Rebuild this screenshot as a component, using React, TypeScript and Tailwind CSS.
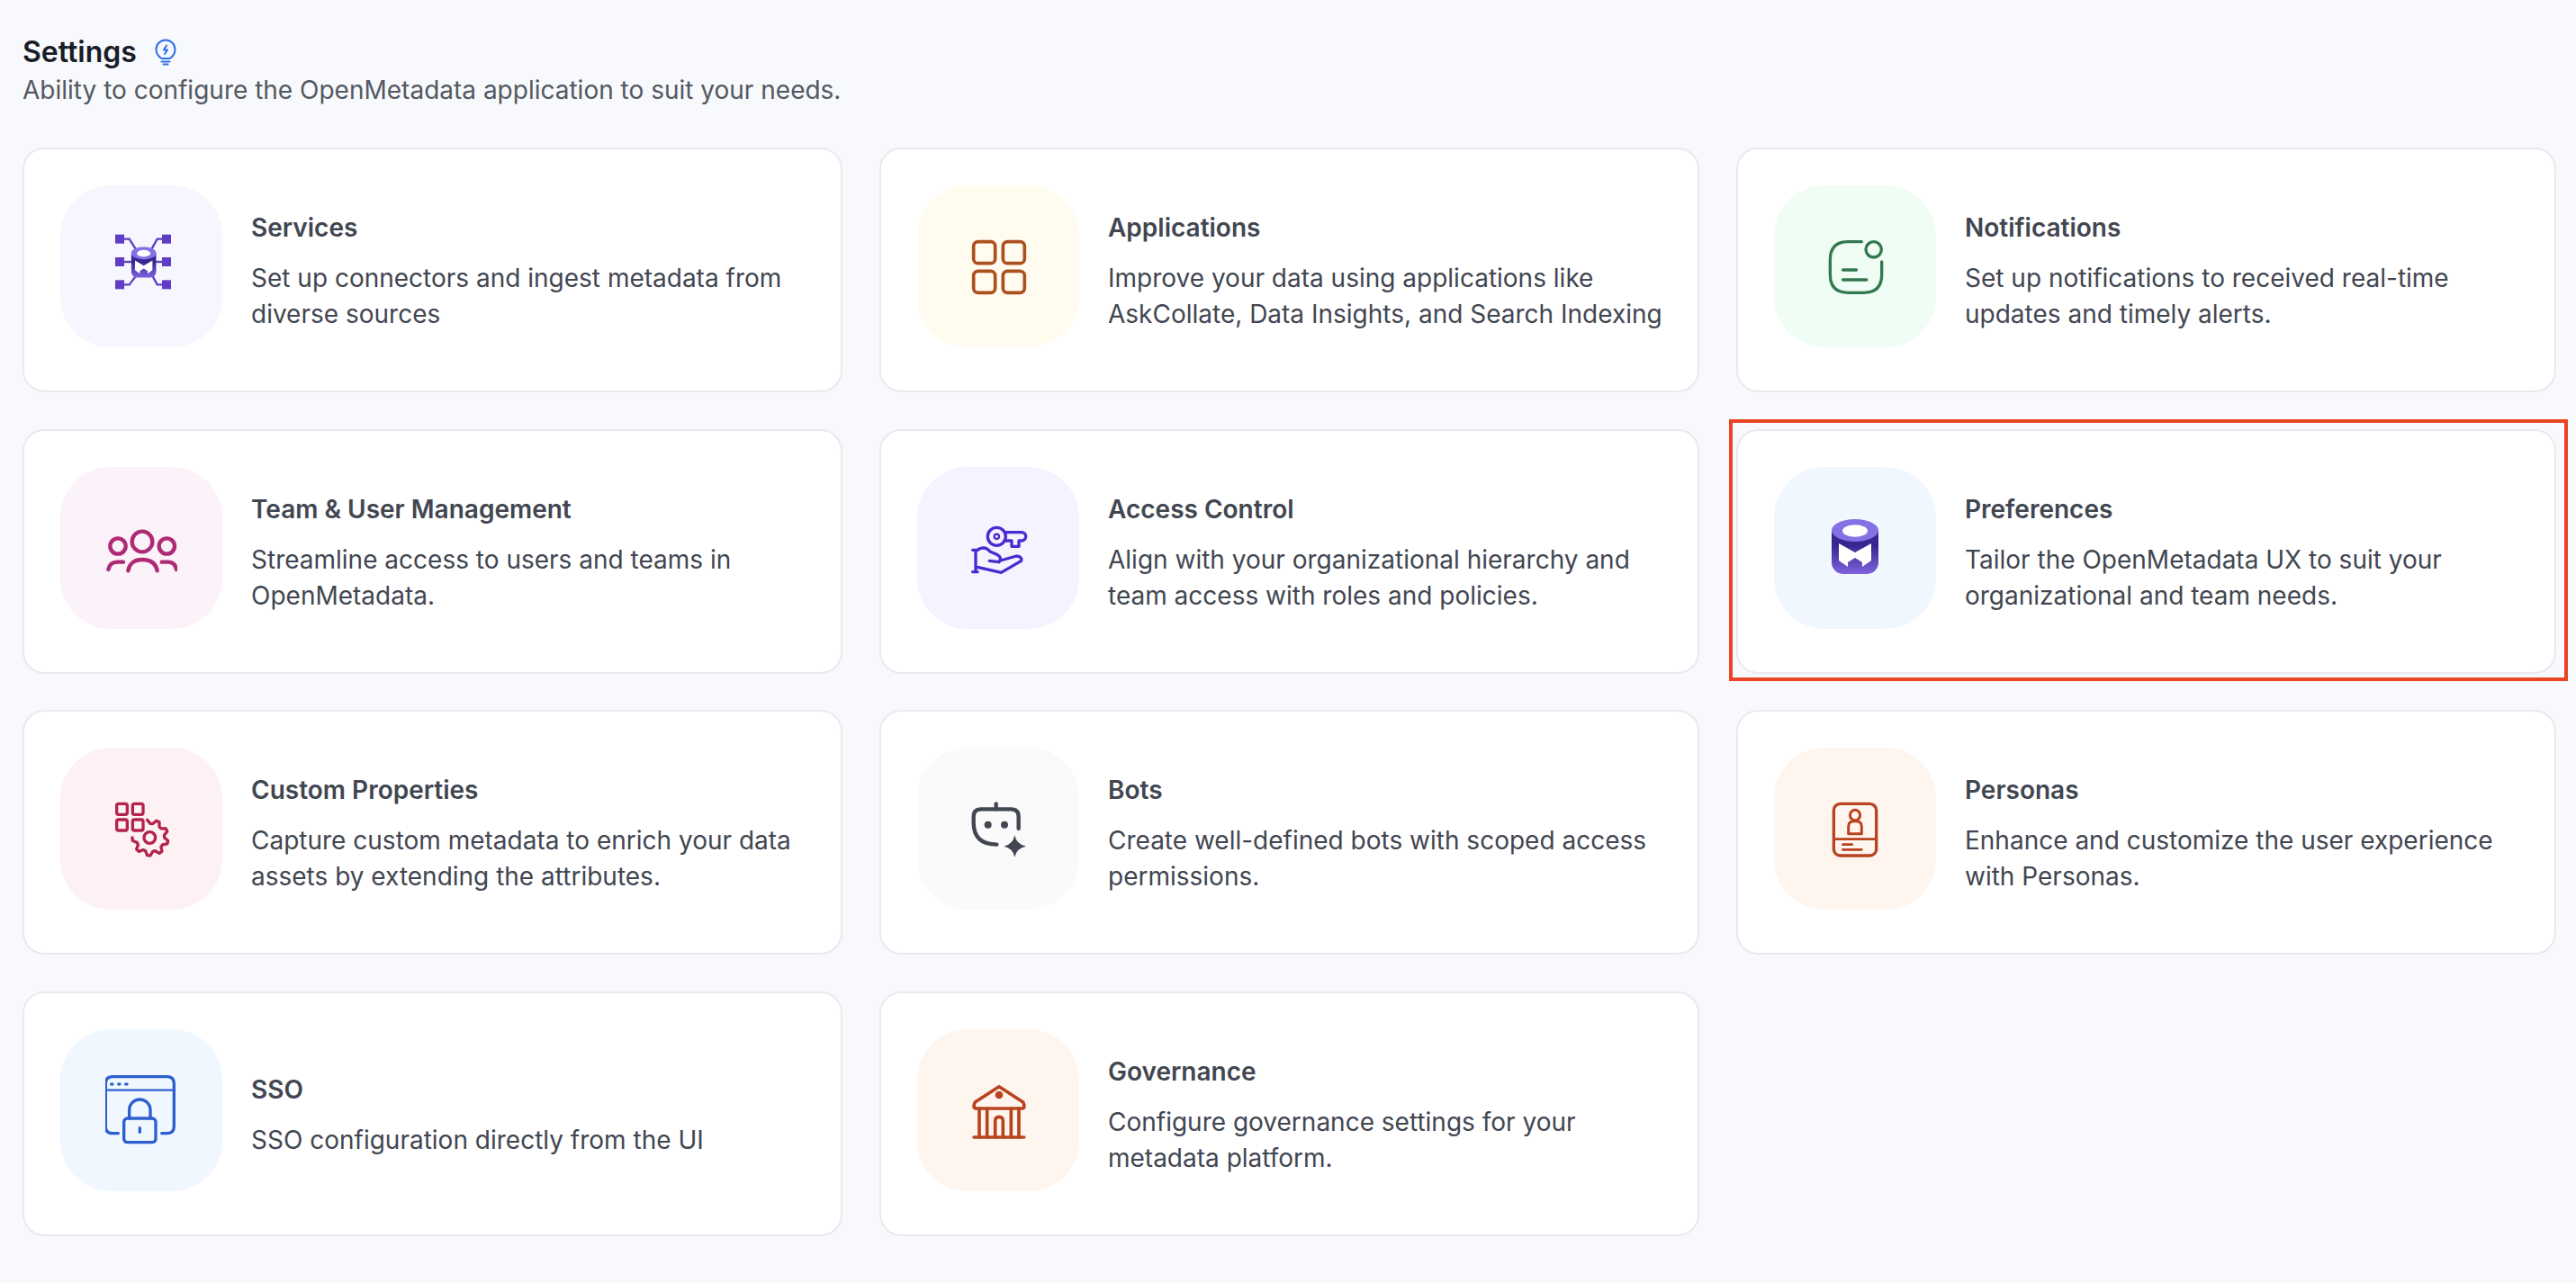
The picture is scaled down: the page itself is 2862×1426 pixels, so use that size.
import React from 'react';

// Settings landing page: header plus a three column grid of category cards

const OmLogo: React.FC<{ x: number; y: number; width: number; height: number }> = ({ x, y, width, height }) => (
    <svg x={x} y={y} width={width} height={height} viewBox="0 0 52 61" preserveAspectRatio="none">
        <defs>
            <linearGradient id="om-body" x1="0" y1="0" x2="0" y2="1">
                <stop offset="0.35" stopColor="#37268F" />
                <stop offset="1" stopColor="#7F63DF" />
            </linearGradient>
        </defs>
        <path d="M0 12.5 V48 A13 13 0 0 0 13 61 H39 A13 13 0 0 0 52 48 V12.5 Z" fill="url(#om-body)" />
        <ellipse cx="26" cy="12.5" rx="26" ry="12.5" fill="#8570E4" />
        <ellipse cx="26" cy="13" rx="14" ry="6.8" fill="#ffffff" />
        <path d="M8 27 L26 37 L44 27 V46 L34 53 V48 L26 43 L18 48 V53 L8 46 Z" fill="#ffffff" />
    </svg>
);

const ServicesIcon = () => (
    <svg viewBox="230 197 240 240" className="h-20 w-20">
        <g fill="#5F3DC4">
            <rect x="263" y="211" width="30" height="30" />
            <rect x="263" y="287" width="30" height="30" />
            <rect x="263" y="363" width="30" height="30" />
            <rect x="419" y="211" width="30" height="30" />
            <rect x="419" y="287" width="30" height="30" />
            <rect x="419" y="363" width="30" height="30" />
        </g>
        <g fill="none" stroke="#5F3DC4" strokeWidth="7">
            <path d="M293 226 H310 L333 262" />
            <path d="M293 302 H320" />
            <path d="M293 378 H310 L335 345" />
            <path d="M419 226 H403 L383 262" />
            <path d="M419 302 H395" />
            <path d="M419 378 H403 L385 345" />
        </g>
        <OmLogo x={316} y={252} width={84} height={103} />
    </svg>
);

const ApplicationsIcon = () => (
    <svg viewBox="207 197 240 240" className="h-20 w-20" fill="none" stroke="#AC5020" strokeWidth="11">
        <rect x="245" y="235" width="72" height="72" rx="15" />
        <rect x="343" y="235" width="72" height="72" rx="15" />
        <rect x="245" y="333" width="72" height="72" rx="15" />
        <rect x="343" y="333" width="72" height="72" rx="15" />
    </svg>
);

const NotificationsIcon = () => (
    <svg viewBox="183 197 240 240" className="h-20 w-20" fill="none" stroke="#33794F" strokeWidth="10" strokeLinecap="round">
        <path d="M325 235 H280 C240 235 220 255 220 295 V345 C220 385 240 405 280 405 H332 C372 405 392 385 392 345 V302" />
        <circle cx="365" cy="261" r="26" />
        <path d="M263 329 H307" strokeWidth="11" />
        <path d="M263 362 H341" strokeWidth="11" />
    </svg>
);

const TeamIcon = () => (
    <svg viewBox="230 173 240 240" className="h-20 w-20" fill="none" stroke="#AE2A75" strokeWidth="13" strokeLinecap="round">
        <circle cx="353" cy="272" r="34" />
        <circle cx="272" cy="287" r="26" />
        <circle cx="435" cy="287" r="26" />
        <path d="M240 365 Q245 340 270 340 H290" />
        <path d="M306 369 C310 343 330 332 353 332 C378 332 398 343 403 369" />
        <path d="M418 340 H440 Q462 340 467 365" />
    </svg>
);

const AccessIcon = () => (
    <svg viewBox="207 173 240 240" className="h-20 w-20" fill="none" stroke="#4B2BD0" strokeWidth="10" strokeLinecap="round" strokeLinejoin="round">
        <circle cx="322" cy="255" r="30" />
        <circle cx="322" cy="255" r="8" strokeWidth="7" />
        <path d="M350 241 H405 A14 14 0 0 1 405 269 H396 V288 H372 V269 H350" />
        <path d="M242 300 H260 M252 300 V372 M242 373 H258" />
        <path d="M262 297 Q285 286 300 305 L322 315 Q342 325 330 340 L298 336" />
        <path d="M335 335 L388 320 Q408 322 404 336 L337 375 L258 357" />
    </svg>
);

// Gear teeth are worked out once, the arc stops where the small squares sit
const gearPath = (() => {
    const cx = 380;
    const cy = 335;
    const points: string[] = [];
    const steps = 28;
    for (let i = 0; i <= steps; i++) {
        const deg = -100 + (i / steps) * 280;
        const phase = ((i + 1) % 4) / 4;
        const r = phase < 0.5 ? 60 : 47;
        const rad = (deg * Math.PI) / 180;
        points.push(`${(cx + r * Math.cos(rad)).toFixed(1)} ${(cy + r * Math.sin(rad)).toFixed(1)}`);
    }
    return `M${points.join(' L')}`;
})();

const CustomPropsIcon = () => (
    <svg viewBox="230 185 240 240" className="h-20 w-20" fill="none" stroke="#B3234F" strokeWidth="10" strokeLinejoin="round" strokeLinecap="round">
        <rect x="268" y="222" width="35" height="36" rx="6" />
        <rect x="321" y="222" width="35" height="36" rx="6" />
        <rect x="268" y="275" width="35" height="36" rx="6" />
        <rect x="321" y="275" width="35" height="36" rx="6" />
        <circle cx="378" cy="335" r="19" />
        <path d={gearPath} />
    </svg>
);

const BotsIcon = () => (
    <svg viewBox="207 185 240 240" className="h-20 w-20" fill="none" stroke="#414651" strokeWidth="13" strokeLinecap="round">
        <path d="M395 305 V265 Q395 240 370 240 H270 Q245 240 245 265 V285 Q245 358 322 358" />
        <path d="M320 222 V240" />
        <circle cx="293" cy="292" r="12" fill="#414651" stroke="none" />
        <circle cx="348" cy="292" r="12" fill="#414651" stroke="none" />
        <path d="M382 327 Q388 358 420 364 Q388 370 382 400 Q376 370 346 364 Q376 358 382 327 Z" fill="#414651" stroke="none" />
    </svg>
);

const PersonasIcon = () => (
    <svg viewBox="183 185 240 240" className="h-20 w-20" fill="none" stroke="#B8431F" strokeWidth="10" strokeLinecap="round">
        <rect x="232" y="222" width="142" height="173" rx="22" />
        <path d="M232 340 H374" strokeWidth="8" />
        <circle cx="303" cy="260" r="17" strokeWidth="9" />
        <path d="M281 322 V298 Q281 280 299 280 H307 Q325 280 325 298 V322 Z" strokeWidth="9" strokeLinejoin="round" />
        <path d="M262 358 H293" strokeWidth="8" />
        <path d="M262 375 H325" strokeWidth="8" />
    </svg>
);

const SsoIcon = () => (
    <svg viewBox="230 191 240 240" className="h-20 w-20" fill="none" stroke="#2C5FCF" strokeWidth="10" strokeLinecap="round">
        <path d="M273 388 H255 Q231 388 231 365 V222 Q231 199 255 199 H435 Q459 199 459 222 V365 Q459 388 435 388 H418" />
        <path d="M231 244 H459" strokeWidth="7" />
        <ellipse cx="252" cy="224" rx="7" ry="5" fill="#2C5FCF" stroke="none" />
        <ellipse cx="276" cy="224" rx="7" ry="5" fill="#2C5FCF" stroke="none" />
        <ellipse cx="300" cy="224" rx="7" ry="5" fill="#2C5FCF" stroke="none" />
        <rect x="292" y="338" width="106" height="80" rx="12" />
        <path d="M310 338 V310 A35 35 0 0 1 380 310 V338" />
        <path d="M345 370 V384" />
    </svg>
);

const GovernanceIcon = () => (
    <svg viewBox="207 191 240 240" className="h-20 w-20" fill="none" stroke="#B8431F" strokeWidth="11" strokeLinecap="round" strokeLinejoin="round">
        <path d="M330 232 L410 284 Q420 305 405 305 H255 Q240 305 250 284 Z" />
        <circle cx="330" cy="260" r="13" fill="#B8431F" stroke="none" />
        <path d="M264 305 V400 M290 305 V400 M370 305 V400 M396 305 V400" />
        <path d="M317 400 V347 Q317 333 330 333 Q343 333 343 347 V400" />
        <path d="M246 401 H413" />
    </svg>
);

const PreferencesIcon = () => (
    <svg viewBox="0 0 52 61" className="-mt-[3px] h-[61px] w-[52px]">
        <OmLogo x={0} y={0} width={52} height={61} />
    </svg>
);

const cards = [
    { title: 'Services', lines: ['Set up connectors and ingest metadata from', 'diverse sources'], bg: 'bg-[#F7F5FE]', icon: <ServicesIcon /> },
    { title: 'Applications', lines: ['Improve your data using applications like', 'AskCollate, Data Insights, and Search Indexing'], bg: 'bg-[#FFFBEF]', icon: <ApplicationsIcon /> },
    { title: 'Notifications', lines: ['Set up notifications to received real-time', 'updates and timely alerts.'], bg: 'bg-[#EFFDF5]', icon: <NotificationsIcon /> },
    { title: 'Team & User Management', lines: ['Streamline access to users and teams in', 'OpenMetadata.'], bg: 'bg-[#FCF2FA]', icon: <TeamIcon /> },
    { title: 'Access Control', lines: ['Align with your organizational hierarchy and', 'team access with roles and policies.'], bg: 'bg-[#F4F3FF]', icon: <AccessIcon /> },
    { title: 'Preferences', lines: ['Tailor the OpenMetadata UX to suit your', 'organizational and team needs.'], bg: 'bg-[#F0F7FF]', icon: <PreferencesIcon />, highlighted: true },
    { title: 'Custom Properties', lines: ['Capture custom metadata to enrich your data', 'assets by extending the attributes.'], bg: 'bg-[#FDF1F4]', icon: <CustomPropsIcon /> },
    { title: 'Bots', lines: ['Create well-defined bots with scoped access', 'permissions.'], bg: 'bg-[#FAFAFA]', icon: <BotsIcon /> },
    { title: 'Personas', lines: ['Enhance and customize the user experience', 'with Personas.'], bg: 'bg-[#FEF6EE]', icon: <PersonasIcon /> },
    { title: 'SSO', lines: ['SSO configuration directly from the UI'], bg: 'bg-[#F0F7FF]', icon: <SsoIcon /> },
    { title: 'Governance', lines: ['Configure governance settings for your', 'metadata platform.'], bg: 'bg-[#FEF6EE]', icon: <GovernanceIcon /> },
];

const App: React.FC = () => {
    return (
        <div className="min-h-screen bg-[#F8F9FC] pl-[25px] pr-[22px] pt-[38px] [font-family:Inter,sans-serif]">
            <div className="flex items-center gap-[20px]">
                <h1 className="text-[32px] leading-[40px] font-semibold text-[#181D27]">Settings</h1>
                <svg viewBox="0 0 24 30" className="h-[30px] w-[24px]" fill="none" stroke="#2E6FE8" strokeWidth="2" strokeLinecap="round" strokeLinejoin="round">
                    <path d="M7.5 22 C3.5 19.5 1.5 16 1.5 12 A10.5 10.5 0 0 1 22.5 12 C22.5 16 20.5 19.5 16.5 22 Z" />
                    <path d="M13 7.5 L10 12.5 H14 L11 17" />
                    <path d="M7.5 25.5 H16.5 M9.5 28.5 H14.5" />
                </svg>
            </div>
            <p className="mt-[2px] text-[28px] leading-[40px] text-[#535862]">
                Ability to configure the OpenMetadata application to suit your needs.
            </p>

            <div className="mt-[44px] grid grid-cols-3 gap-x-[41px] gap-y-[40.67px]">
                {cards.map((card) => (
                    <div
                        key={card.title}
                        className="relative h-[272px] rounded-[24px] border-2 border-[#E9EAF0] bg-white pl-[40px] pr-[24px] pt-[40px]"
                    >
                        <div className="flex h-[180px] items-center gap-[32px]">
                            <div className={`flex h-[180px] w-[180px] shrink-0 items-center justify-center rounded-[56px] ${card.bg}`}>
                                {card.icon}
                            </div>
                            <div className="pt-[10px] text-[28px] leading-[40px] text-[#414651] whitespace-nowrap">
                                <div className="mb-[16px] font-semibold">{card.title}</div>
                                {card.lines.map((line) => (
                                    <div key={line}>{line}</div>
                                ))}
                            </div>
                        </div>
                        {card.highlighted && (
                            <div className="absolute -left-[10px] -right-[15px] -top-[13px] -bottom-[10px] border-[4px] border-[#EA4425]" />
                        )}
                    </div>
                ))}
            </div>
        </div>
    );
};

export default App;
